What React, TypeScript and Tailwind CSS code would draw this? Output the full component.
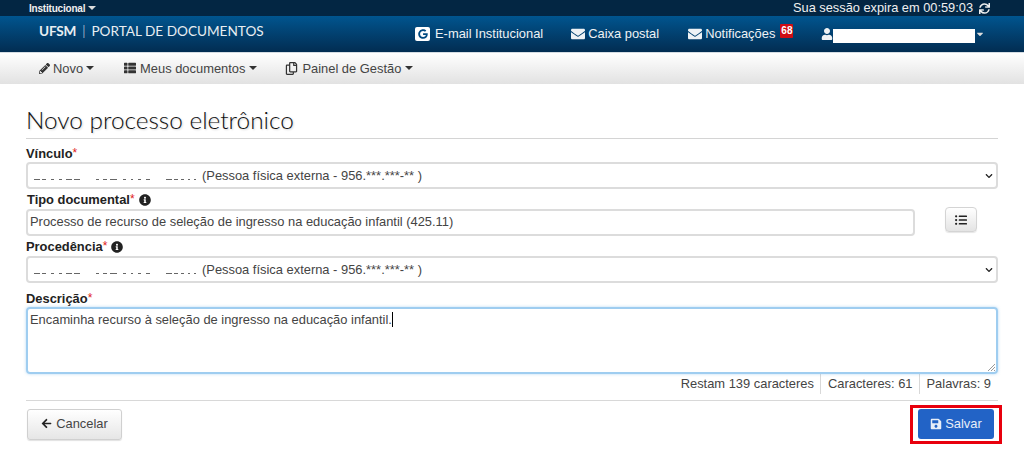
import React from "react";
import { FaPencilAlt, FaThList, FaRegCopy, FaEnvelope, FaUser, FaSync, FaInfoCircle, FaListUl, FaArrowLeft, FaSave, FaGoogle, FaCaretDown, FaChevronDown } from "react-icons/fa";

function Caret({ className = "" }: { className?: string }) {
  return <span className={`inline-block w-0 h-0 border-x-[4px] border-x-transparent border-t-[4px] ${className}`} />;
}

function Redacted() {
  return (
    <svg width="162" height="6" viewBox="0 0 162 6" className="shrink-0" aria-hidden="true">
      <g fill="#666">
        <rect x="0" y="3" width="6" height="1" /><rect x="8" y="3" width="4" height="1" />
        <rect x="17" y="3" width="3" height="1" /><rect x="25" y="3" width="3" height="1" />
        <rect x="32" y="3" width="6" height="1" /><rect x="40" y="3" width="6" height="1" />
        <rect x="62" y="3" width="3" height="1" /><rect x="69" y="3" width="4" height="1" />
        <rect x="76" y="3" width="7" height="1" /><rect x="89" y="3" width="3" height="1" />
        <rect x="97" y="3" width="2" height="1" /><rect x="104" y="3" width="3" height="1" />
        <rect x="112" y="3" width="4" height="1" /><rect x="132" y="3" width="6" height="1" />
        <rect x="140" y="3" width="4" height="1" /><rect x="147" y="3" width="3" height="1" />
        <rect x="154" y="3" width="2" height="1" /><rect x="160" y="3" width="2" height="1" />
      </g>
    </svg>
  );
}

function Req() {
  return <span className="text-[#e02020] font-normal text-[12px] relative -top-[1px]">*</span>;
}

function SelectBox() {
  return (
    <div className="h-[27px] border-2 border-[#dcdcdc] rounded-[4px] bg-white flex items-center pl-[6px] pr-[3px] text-[#444]">
      <span className="mt-[7px]"><Redacted /></span>
      <span className="ml-[6px]">(Pessoa física externa - 956.***.***-** )</span>
      <FaChevronDown className="ml-auto text-[8px] text-[#222]" />
    </div>
  );
}

function Top({ icon, children, className = "" }: { icon: React.ReactNode; children: React.ReactNode; className?: string }) {
  return (
    <span className={`flex items-center gap-[3px] ${className}`}>
      {icon}
      {children}
    </span>
  );
}

export default function App() {
  return (
    <div className="w-[1024px] h-[453px] overflow-hidden bg-white text-[12.9px] text-[#333] font-['Liberation_Sans',Arial,sans-serif]">
      <div className="h-[16px] bg-[#032643] flex items-center justify-between pl-[29px] pr-[34px] text-[#f0f0f0]">
        <span className="flex items-center gap-[3px] text-[10px] font-bold tracking-[-0.2px]">Institucional <Caret className="border-t-[#ddd]" /></span>
        <span className="flex items-center gap-[6px] text-[12.8px]">Sua sessão expira em 00:59:03 <FaSync className="text-[11px]" /></span>
      </div>
      <div className="h-[36px] bg-gradient-to-b from-[#00558f] to-[#022d52] flex items-center pl-[39px] text-[#eef2f5] border-b border-[#d5dde3] box-content">
        <div className="flex items-center -mt-[5px] font-['Lato',sans-serif] text-[13.6px] text-[#e8eef2] w-[376px]">
          <span className="font-bold tracking-[-0.2px]">UFSM</span>
          <span className="mx-[6px] font-light">|</span>
          <span>PORTAL DE DOCUMENTOS</span>
        </div>
        <Top className="gap-[5px]" icon={<span className="w-[15px] h-[14px] bg-white rounded-[2px] flex items-center justify-center"><FaGoogle className="text-[10px] text-[#014a80]" /></span>}>
          E-mail Institucional
        </Top>
        <Top className="ml-[28px]" icon={<FaEnvelope className="text-[14px]" />}>Caixa postal</Top>
        <Top className="ml-[29px] gap-[2px]" icon={<FaEnvelope className="text-[14px]" />}>
          Notificações
          <span className="ml-[2px] -mt-[5px] bg-[#d00c14] text-white text-[10px] font-bold leading-[14px] px-[1px] rounded-[1px]">68</span>
        </Top>
        <span className="ml-[28px] flex items-center">
          <FaUser className="text-[12px]" />
          <span className="w-[142px] h-[14px] mt-[3px] bg-white" />
          <FaCaretDown className="text-[10px] text-[#ddd]" />
        </span>
      </div>
      <div className="h-[31px] bg-gradient-to-b from-white to-[#e2e2e2] flex items-center pl-[39px] text-[#444]">
        <Top icon={<FaPencilAlt className="text-[11px] text-[#333]" />}>Novo <Caret className="border-t-[#333]" /></Top>
        <Top className="ml-[30px] gap-[4px]" icon={<FaThList className="text-[12px] text-[#333]" />}>Meus documentos <Caret className="border-t-[#333]" /></Top>
        <Top className="ml-[28px] gap-[4px]" icon={<FaRegCopy className="text-[13px] text-[#333]" />}>Painel de Gestão <Caret className="border-t-[#333]" /></Top>
      </div>

      <div className="w-[972px] ml-[26px]">
        <h1 className="mt-[19px] h-[35px] leading-[34px] text-[24.4px] text-[#111] font-['Lato',sans-serif] font-light [text-shadow:1px_1px_2px_rgba(0,0,0,0.18)] border-b border-[#d4d4d4] box-content">Novo processo eletrônico</h1>

        <div className="mt-[6px] h-[17px] leading-[18px] font-bold text-[#222]">Vínculo<Req /></div>
        <SelectBox />

        <div className="mt-[2px] h-[18px] leading-[18px] font-bold text-[#222] flex items-center pl-[1px]">
          <span>Tipo documental<Req /></span><FaInfoCircle className="ml-[4px] text-[12px]" />
        </div>
        <div className="flex items-start">
          <div className="w-[889px] h-[27px] border-2 border-[#dcdcdc] rounded-[4px] flex items-center pl-[2px] pb-[1px] text-[#444]">Processo de recurso de seleção de ingresso na educação infantil (425.11)</div>
          <button className="ml-[30px] -mt-[2px] w-[32px] h-[25px] border border-[#d4d4d4] rounded-[4px] bg-gradient-to-b from-white to-[#e4e4e4] flex items-center justify-center shadow-[0_1px_1px_rgba(0,0,0,0.1)]"><FaListUl className="text-[12px] text-[#222]" /></button>
        </div>

        <div className="mt-[2px] h-[18px] leading-[18px] font-bold text-[#222] flex items-center">
          <span>Procedência<Req /></span><FaInfoCircle className="ml-[4px] text-[12px]" />
        </div>
        <SelectBox />

        <div className="mt-[7px] h-[17px] leading-[18px] font-bold text-[#222]">Descrição<Req /></div>
        <div className="relative h-[67px] border-2 border-[#9fcdf0] rounded-[4px] pl-[2px] pt-[1px] leading-[20px] text-[#444] shadow-[0_0_3px_rgba(102,175,233,0.5)]">
          Encaminha recurso à seleção de ingresso na educação infantil.<span className="inline-block w-px h-[15px] bg-black align-[-3px]" />
          <svg width="9" height="9" viewBox="0 0 9 9" className="absolute right-0 bottom-0" aria-hidden="true"><path d="M8 1 1 8M8 4 4 8M8 7 7 8" stroke="#999" fill="none" /></svg>
        </div>

        <div className="flex justify-end h-[20px] leading-[19px] text-[#444] pr-[7px]">
          <span className="pr-[6px] border-r border-[#d8d8d8]">Restam 139 caracteres</span>
          <span className="pl-[7px] pr-[6px] border-r border-[#d8d8d8]">Caracteres: 61</span>
          <span className="pl-[7px]">Palavras: 9</span>
        </div>

        <div className="mt-[6px] border-t border-[#d8d8d8] flex justify-between items-start pt-[8px]">
          <button className="ml-[1px] w-[95px] h-[31px] border border-[#d0d0d0] rounded-[3px] bg-gradient-to-b from-white to-[#e6e6e6] flex items-center justify-center gap-[4px] pb-[2px] text-[#444] shadow-[0_1px_1px_rgba(0,0,0,0.12)]">
            <FaArrowLeft className="text-[11px] text-[#222]" /> Cancelar
          </button>
          <div className="-mt-[4px] -mr-[4px] border-[3px] border-[#e8000d] px-[5px] py-[1px] w-[92px] h-[39px]">
            <button className="w-[76px] h-[30px] bg-[#2263c6] rounded-[3px] text-[#e8eef8] flex items-center justify-center gap-[3px]">
              <FaSave className="text-[12px]" /> Salvar
            </button>
          </div>
        </div>
      </div>
    </div>
  );
}
